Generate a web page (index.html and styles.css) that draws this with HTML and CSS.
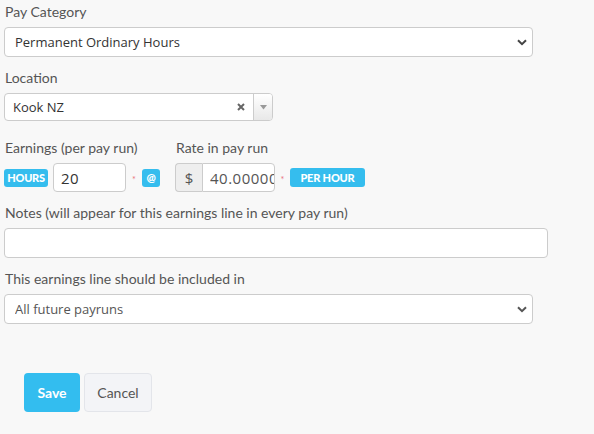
FILE: index.html
```html
<!DOCTYPE html>
<html lang="en">
<head>
<meta charset="utf-8">
<title>Earnings line</title>
<link rel="stylesheet" href="styles.css">
</head>
<body>
<form class="form">
  <div class="field">
    <label class="label">Pay Category</label>
    <div class="select-wrap wide">
      <select class="select"><option>Permanent Ordinary Hours</option></select>
      <svg class="chev" width="10" height="7" viewBox="0 0 10 7"><path d="M1 1.2 5 5.2 9 1.2" fill="none" stroke="#444" stroke-width="2"/></svg>
    </div>
  </div>

  <div class="field">
    <label class="label">Location</label>
    <div class="chosen">
      <span class="chosen-text">Kook NZ</span>
      <svg class="chosen-clear" width="8" height="8" viewBox="0 0 8 8"><path d="M1 1 7 7M7 1 1 7" stroke="#666" stroke-width="2"/></svg>
      <span class="chosen-toggle"><svg width="7" height="5" viewBox="0 0 7 5"><path d="M0 0h7L3.5 4.5z" fill="#999"/></svg></span>
    </div>
  </div>

  <div class="row">
    <div class="field">
      <label class="label">Earnings (per pay run)</label>
      <div class="inline">
        <span class="badge">HOURS</span>
        <input class="input units" type="text" value="20">
        <span class="req">*</span>
        <span class="badge at">@</span>
      </div>
    </div>
    <div class="field">
      <label class="label">Rate in pay run</label>
      <div class="inline">
        <div class="group">
          <span class="addon">$</span>
          <input class="input rate" type="text" value="40.00000">
        </div>
        <span class="req">*</span>
        <span class="badge per">PER HOUR</span>
      </div>
    </div>
  </div>

  <div class="field">
    <label class="label">Notes (will appear for this earnings line in every pay run)</label>
    <input class="input notes" type="text">
  </div>

  <div class="field">
    <label class="label">This earnings line should be included in</label>
    <div class="select-wrap wide">
      <select class="select light"><option>All future payruns</option></select>
      <svg class="chev" width="10" height="7" viewBox="0 0 10 7"><path d="M1 1.2 5 5.2 9 1.2" fill="none" stroke="#555" stroke-width="2"/></svg>
    </div>
  </div>

  <div class="actions">
    <button type="button" class="btn primary">Save</button>
    <button type="button" class="btn secondary">Cancel</button>
  </div>
</form>
</body>
</html>
```

FILE: styles.css
```css
html, body {
  margin: 0;
  padding: 0;
  background: #f8f8f8;
}

body {
  font-family: Lato, "Open Sans", Arial, sans-serif;
  color: #555;
}

.form {
  padding: 4px 0 0 4px;
  width: 544px;
}

.field {
  display: flex;
  flex-direction: column;
  margin-bottom: 13px;
}

.label {
  font-size: 14px;
  line-height: 16px;
  color: #555;
  margin: 0 0 7px 1px;
}

.select-wrap {
  position: relative;
  width: 529px;
}

.select {
  -webkit-appearance: none;
  appearance: none;
  width: 100%;
  height: 30px;
  border: 1px solid #ccc;
  border-radius: 4px;
  background: #fff;
  padding: 0 30px 0 10px;
  font-family: "Open Sans", Arial, sans-serif;
  font-size: 13px;
  color: #333;
  margin: 0;
}

.select.light { color: #555; }

.chev {
  position: absolute;
  right: 6px;
  top: 12px;
  pointer-events: none;
}

.chosen {
  display: flex;
  align-items: center;
  width: 269px;
  height: 28px;
  box-sizing: border-box;
  border: 1px solid #ccc;
  border-radius: 4px;
  background: #fff;
  overflow: hidden;
}

.chosen-text {
  flex: 1;
  padding-left: 8px;
  font-family: "Open Sans", Arial, sans-serif;
  font-size: 13px;
  color: #333;
}

.chosen-clear {
  margin-right: 8px;
}

.chosen-toggle {
  width: 18px;
  height: 100%;
  display: flex;
  align-items: center;
  justify-content: center;
  border-left: 1px solid #ccc;
  background: linear-gradient(#fff, #e8e8e8);
}

/* earnings + rate side by side */
.row {
  display: flex;
  gap: 15px;
  padding-top: 6px;
}

.inline {
  display: flex;
  align-items: center;
  height: 29px;
}

.badge {
  display: inline-flex;
  align-items: center;
  justify-content: center;
  box-sizing: border-box;
  width: 44px;
  height: 18px;
  background: #35bdee;
  color: #fff;
  font-size: 11px;
  font-weight: 900;
  border-radius: 3px;
  letter-spacing: -0.3px;
}

.badge.at { width: 18px; }
.badge.per { width: 75px; height: 19px; letter-spacing: -0.2px; }

.input {
  box-sizing: border-box;
  height: 29px;
  border: 1px solid #ccc;
  border-radius: 4px;
  background: #fff;
  font-family: "Open Sans", Arial, sans-serif;
  font-size: 13px;
  color: #333;
  padding: 0 8px;
  margin: 0;
  outline: none;
}

.units {
  width: 73px;
  margin-left: 5px;
  font-size: 15px;
  letter-spacing: 0.5px;
  padding-left: 7px;
}

.req {
  color: #e9737c;
  font-size: 9px;
  width: 16px;
  text-align: center;
  padding-top: 4px;
}

.group {
  display: flex;
  height: 29px;
}

.addon {
  width: 27px;
  box-sizing: border-box;
  display: flex;
  align-items: center;
  justify-content: center;
  background: #eee;
  border: 1px solid #ccc;
  border-right: 0;
  border-radius: 4px 0 0 4px;
  font-family: "Open Sans", Arial, sans-serif;
  font-size: 15px;
  color: #555;
}

.rate {
  width: 73px;
  border-radius: 0 4px 4px 0;
  padding: 0 0 0 7px;
  font-size: 15px;
  letter-spacing: 0.5px;
  color: #555;
}

.group + .req { width: 15px; }

.notes {
  width: 544px;
  height: 30px;
}

.actions {
  display: flex;
  gap: 4px;
  margin: 49px 0 0 20px;
}

.btn {
  height: 39px;
  border-radius: 4px;
  font-family: Lato, "Open Sans", Arial, sans-serif;
  font-size: 14px;
  cursor: pointer;
  padding: 0;
}

.primary {
  width: 56px;
  border: 0;
  background: #33bdef;
  color: #fff;
  font-weight: 700;
}

.secondary {
  width: 68px;
  border: 1px solid #e3e5ea;
  background: #f3f4f7;
  color: #555;
}
```
